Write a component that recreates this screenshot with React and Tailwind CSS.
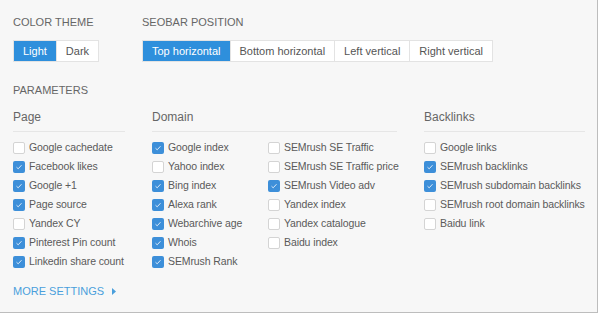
import { useState } from 'react';

const page = [
  ['Google cachedate', false],
  ['Facebook likes', true],
  ['Google +1', true],
  ['Page source', true],
  ['Yandex CY', false],
  ['Pinterest Pin count', true],
  ['Linkedin share count', true],
];

const domainA = [
  ['Google index', true],
  ['Yahoo index', false],
  ['Bing index', true],
  ['Alexa rank', true],
  ['Webarchive age', true],
  ['Whois', true],
  ['SEMrush Rank', true],
];

const domainB = [
  ['SEMrush SE Traffic', false],
  ['SEMrush SE Traffic price', false],
  ['SEMrush Video adv', true],
  ['Yandex index', false],
  ['Yandex catalogue', false],
  ['Baidu index', false],
];

const backlinks = [
  ['Google links', false],
  ['SEMrush backlinks', true],
  ['SEMrush subdomain backlinks', true],
  ['SEMrush root domain backlinks', false],
  ['Baidu link', false],
];

function Check({ label, checked }) {
  const [on, setOn] = useState(checked);
  return (
    <label className="flex items-center h-[19px] cursor-pointer whitespace-nowrap" onClick={() => setOn(!on)}>
      {on ? (
        <span className="shrink-0 w-[12px] h-[12px] rounded-[2px] bg-[#3d8fd9] flex items-center justify-center">
          <svg width="8" height="8" viewBox="0 0 8 8">
            <path d="M1.5 4.2 L3.2 5.8 L6.5 2.2" fill="none" stroke="#d8e8f7" strokeWidth="1" />
          </svg>
        </span>
      ) : (
        <span className="shrink-0 w-[12px] h-[12px] rounded-[2px] bg-white border border-[#d4d4d4]" />
      )}
      <span className="ml-[4px] text-[10.5px] tracking-[-0.1px] text-[#5a5a5a]">{label}</span>
    </label>
  );
}

function Column({ title, className, children }) {
  return (
    <div className={`shrink-0 ${className}`}>
      <div className="text-[12px] text-[#666] h-[16px] leading-[16px]">{title}</div>
      <div className="h-px bg-[#e6e6e6] mt-[6px] mb-[6px]" />
      {children}
    </div>
  );
}

function Segmented({ items, active }) {
  const [sel, setSel] = useState(active);
  return (
    <div className="flex border border-[#e3e3e3] bg-white h-[22px]">
      {items.map((it, i) => (
        <button
          key={it}
          onClick={() => setSel(i)}
          className={`h-full px-[9px] text-[11px] leading-none whitespace-nowrap ${
            i > 0 ? 'border-l border-[#e3e3e3]' : ''
          } ${sel === i ? 'bg-[#2e8fdc] text-white' : 'text-[#555]'}`}
        >
          {it}
        </button>
      ))}
    </div>
  );
}

export default function App() {
  return (
    <div className="w-[600px] h-[314px] bg-white" style={{ fontFamily: '"Liberation Sans", Arial, sans-serif' }}>
      <div className="w-[598px] h-[313px] bg-[#f7f7f7] border-r border-b border-[#bdbdbd] px-[13px] pt-[14px]">
        <div className="flex">
          <div className="w-[129px]">
            <div className="text-[11px] text-[#666] uppercase h-[16px] leading-[16px]">Color theme</div>
            <div className="mt-[10px] flex">
              <Segmented items={['Light', 'Dark']} active={0} />
            </div>
          </div>
          <div>
            <div className="text-[11px] text-[#666] uppercase h-[16px] leading-[16px]">Seobar position</div>
            <div className="mt-[10px] flex">
              <Segmented items={['Top horizontal', 'Bottom horizontal', 'Left vertical', 'Right vertical']} active={0} />
            </div>
          </div>
        </div>

        <div className="mt-[20px] text-[11px] text-[#666] uppercase h-[16px] leading-[16px]">Parameters</div>

        <div className="mt-[11px] flex">
          <Column title="Page" className="w-[112px]">
            {page.map(([l, c]) => <Check key={l} label={l} checked={c} />)}
          </Column>
          <Column title="Domain" className="ml-[27px] w-[245px]">
            <div className="flex">
              <div className="w-[116px] shrink-0">
                {domainA.map(([l, c]) => <Check key={l} label={l} checked={c} />)}
              </div>
              <div>
                {domainB.map(([l, c]) => <Check key={l} label={l} checked={c} />)}
              </div>
            </div>
          </Column>
          <Column title="Backlinks" className="ml-[27px] w-[161px]">
            {backlinks.map(([l, c]) => <Check key={l} label={l} checked={c} />)}
          </Column>
        </div>

        <div className="mt-[12px] flex items-center text-[11px] text-[#4a9fdc] uppercase">
          More settings
          <svg className="ml-[8px]" width="4" height="7" viewBox="0 0 4 7">
            <path d="M0 0 L4 3.5 L0 7 Z" fill="#4a9fdc" />
          </svg>
        </div>
      </div>
    </div>
  );
}
